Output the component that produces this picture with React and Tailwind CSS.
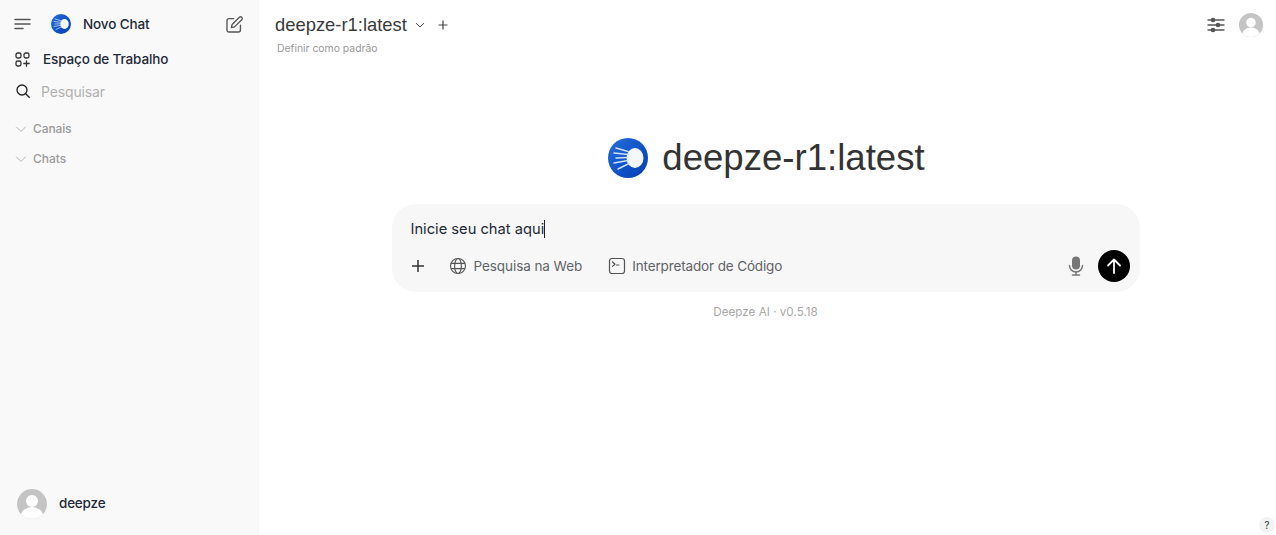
import React from "react";

const Logo = ({ size, id }) => (
  <svg width={size} height={size} viewBox="0 0 40 40" className="shrink-0">
    <defs>
      <linearGradient id={id} x1="0" y1="0" x2="1" y2="1">
        <stop offset="0" stopColor="#2a6fd8" />
        <stop offset="0.55" stopColor="#0d52c8" />
        <stop offset="1" stopColor="#0a3fae" />
      </linearGradient>
    </defs>
    <circle cx="20" cy="20" r="20" fill={`url(#${id})`} />
    <ellipse cx="27" cy="20" rx="8.5" ry="10" fill="#f4f7fc" />
    <g stroke="#cfdff7" strokeWidth="1.5" strokeLinecap="round" fill="none">
      <path d="M20 13.5 L8 10" />
      <path d="M20 16.5 L6 15" />
      <path d="M20 19.5 L8 20" />
      <path d="M20 22.5 L6 25" />
      <path d="M21 25.5 L10 31" />
    </g>
  </svg>
);

const Avatar = ({ size }) => (
  <svg width={size} height={size} viewBox="0 0 40 40" className="shrink-0">
    <defs>
      <clipPath id={`av${size}`}>
        <circle cx="20" cy="20" r="20" />
      </clipPath>
    </defs>
    <g clipPath={`url(#av${size})`}>
      <rect width="40" height="40" fill="#c4c4c4" />
      <circle cx="20" cy="16" r="8" fill="#fff" />
      <ellipse cx="20" cy="37" rx="15" ry="13" fill="#fff" />
    </g>
  </svg>
);

const Chevron = () => (
  <svg width="12" height="12" viewBox="0 0 24 24" fill="none" stroke="#b4b4b4" strokeWidth="2" className="shrink-0">
    <path d="M3 8l9 9 9-9" strokeLinecap="round" strokeLinejoin="round" />
  </svg>
);

export default function App() {
  return (
    <div className="flex h-[535px] w-[1276px] overflow-hidden bg-white font-['Inter',sans-serif] text-[#333]">
      <aside className="flex w-[259px] shrink-0 flex-col bg-[#f9f9f9]">
        <div className="flex h-[48px] items-center pl-[14px] pr-[15px]">
          <svg width="17" height="12" viewBox="0 0 17 12" fill="none" stroke="#555" strokeWidth="1.5" strokeLinecap="round">
            <path d="M1 1.5h15M1 6h15M1 10.5h8" />
          </svg>
          <div className="ml-[20px]"><Logo size={20} id="lg-a" /></div>
          <span className="ml-[12px] text-[13.5px] font-medium tracking-[-0.01em] text-[#1f2937]">Novo Chat</span>
          <svg className="ml-auto" width="19" height="19" viewBox="0 0 24 24" fill="none" stroke="#555" strokeWidth="1.7" strokeLinecap="round" strokeLinejoin="round">
            <path d="M11 4.5H5a2.5 2.5 0 0 0-2.5 2.5v12A2.5 2.5 0 0 0 5 21.5h12a2.5 2.5 0 0 0 2.5-2.5v-6" />
            <path d="M18.5 2.6a2.2 2.2 0 0 1 3 3L12 15l-4 1 1-4z" />
          </svg>
        </div>
        <div className="flex h-[22px] items-center pl-[15px]">
          <svg width="15" height="15" viewBox="0 0 15 15" fill="none" stroke="#333" strokeWidth="1.3" strokeLinecap="round">
            <rect x="1" y="1" width="5" height="5" rx="1.8" />
            <rect x="9" y="1" width="5" height="5" rx="1.8" />
            <rect x="1" y="9" width="5" height="5" rx="1.8" />
            <path d="M11.5 8.8v5.4M8.8 11.5h5.4" />
          </svg>
          <span className="ml-[13px] text-[13.5px] font-medium tracking-[-0.01em] text-[#1f2937]">Espaço de Trabalho</span>
        </div>
        <div className="mt-[10px] flex h-[22px] items-center pl-[16px]">
          <svg width="14" height="14" viewBox="0 0 14 14" fill="none" stroke="#222" strokeWidth="1.3" strokeLinecap="round">
            <circle cx="6" cy="6" r="5" />
            <path d="M9.7 9.7l3.5 3.5" />
          </svg>
          <span className="ml-[11px] text-[14px] tracking-[-0.01em] text-[#b0b0b0]">Pesquisar</span>
        </div>
        <div className="mt-[18px] flex h-[18px] items-center gap-[6px] pl-[15px]">
          <Chevron />
          <span className="text-[12px] font-medium tracking-[-0.01em] text-[#9b9b9b]">Canais</span>
        </div>
        <div className="mt-[12px] flex h-[18px] items-center gap-[6px] pl-[15px]">
          <Chevron />
          <span className="text-[12px] font-medium text-[#9b9b9b]">Chats</span>
        </div>
        <div className="mt-auto mb-[16px] flex items-center pl-[17px]">
          <Avatar size={30} />
          <span className="-mt-[2px] ml-[12px] text-[13.5px] font-medium tracking-[-0.015em] text-[#1f2937]">deepze</span>
        </div>
      </aside>

      <main className="relative flex min-w-0 flex-1 flex-col">
        <header className="flex h-[48px] items-start pl-[16px] pr-[13px]">
          <div className="flex flex-col">
            <div className="flex h-[50px] items-center">
              <span className="font-['Liberation_Sans',sans-serif] text-[18.4px] text-[#3a3a3a]">deepze-r1:latest</span>
              <svg className="ml-[8px]" width="10" height="10" viewBox="0 0 24 24" fill="none" stroke="#444" strokeWidth="2.4" strokeLinecap="round" strokeLinejoin="round">
                <path d="M3 8l9 9 9-9" />
              </svg>
              <svg className="ml-[13px]" width="10" height="10" viewBox="0 0 10 10" fill="none" stroke="#444" strokeWidth="1.2">
                <path d="M5 0.5v9M0.5 5h9" />
              </svg>
            </div>
            <span className="-mt-[7px] pl-[2px] text-[10.4px] leading-[12px] text-[#9a9a9a]">Definir como padrão</span>
          </div>
          <div className="ml-auto flex h-[50px] items-center gap-[14px]">
            <svg width="18" height="16" viewBox="0 0 18 16" fill="none" stroke="#555" strokeWidth="1.4" strokeLinecap="round">
              <path d="M1 3h16M1 8h16M1 13h16" />
              <circle cx="6" cy="3" r="1.6" fill="#555" />
              <circle cx="11" cy="8" r="1.6" fill="#555" />
              <circle cx="6" cy="13" r="1.6" fill="#555" />
            </svg>
            <Avatar size={24} />
          </div>
        </header>

        <div className="flex flex-col items-center pr-[4px] pt-[88px]">
          <div className="ml-[2px] flex items-center gap-[14px]">
            <Logo size={40} id="lg-b" />
            <span className="font-['Liberation_Sans',sans-serif] text-[36.6px] leading-[44px] text-[#333]">deepze-r1:latest</span>
          </div>
          <div className="mt-[24px] flex h-[88px] w-[748px] flex-col rounded-[24px] bg-[#f7f7f7] pl-[18px] pr-[10px] pt-[15px]">
            <div className="ml-[1px] flex h-[20px] items-center text-[14.7px] text-[#1f2937]">
              Inicie seu chat aqui
              <span className="h-[18px] w-px bg-[#222]" />
            </div>
            <div className="mt-[11px] flex h-[32px] items-center text-[13.5px] text-[#5f6368]">
              <svg width="16" height="16" viewBox="0 0 16 16" fill="none" stroke="#333" strokeWidth="1.5">
                <path d="M8 2v12M2 8h12" />
              </svg>
              <svg className="ml-[23px]" width="18" height="18" viewBox="0 0 24 24" fill="none" stroke="#555" strokeWidth="1.5">
                <circle cx="12" cy="12" r="10" />
                <ellipse cx="12" cy="12" rx="4.5" ry="10" />
                <path d="M2.8 8.5h18.4M2.8 15.5h18.4" />
              </svg>
              <span className="ml-[7px] tracking-[-0.005em]">Pesquisa na Web</span>
              <svg className="ml-[26px]" width="18" height="18" viewBox="0 0 18 18" fill="none" stroke="#555" strokeWidth="1.2" strokeLinecap="round" strokeLinejoin="round">
                <rect x="1.5" y="1.5" width="15" height="15" rx="2.5" />
                <path d="M4.5 5l2.5 2.2-2.5 2.2M8.5 8h2.5" />
              </svg>
              <span className="ml-[6px] tracking-[-0.01em]">Interpretador de Código</span>
              <svg className="ml-auto" width="16" height="20" viewBox="0 0 16 20" fill="#777">
                <rect x="4" y="0.5" width="8" height="13" rx="4" />
                <path d="M1.5 9.5a6.5 6.5 0 0 0 13 0" fill="none" stroke="#777" strokeWidth="1.5" strokeLinecap="round" />
                <path d="M8 16v2.5M4.5 19h7" fill="none" stroke="#777" strokeWidth="1.5" strokeLinecap="round" />
              </svg>
              <div className="ml-[14px] flex h-[32px] w-[32px] items-center justify-center rounded-full bg-black">
                <svg width="18" height="18" viewBox="0 0 18 18" fill="none" stroke="#fff" strokeWidth="1.8" strokeLinecap="round" strokeLinejoin="round">
                  <path d="M9 16V2.5M3 8.5l6-6 6 6" />
                </svg>
              </div>
            </div>
          </div>
          <div className="mt-[12px] text-[11.7px] leading-[16px] text-[#a8a8a8]">Deepze AI · v0.5.18</div>
        </div>

        <div className="absolute bottom-[2px] right-[1px] flex h-[16px] w-[16px] items-center justify-center rounded-full bg-[#f3f3f3] text-[10px] font-medium text-[#555]">?</div>
      </main>
    </div>
  );
}
